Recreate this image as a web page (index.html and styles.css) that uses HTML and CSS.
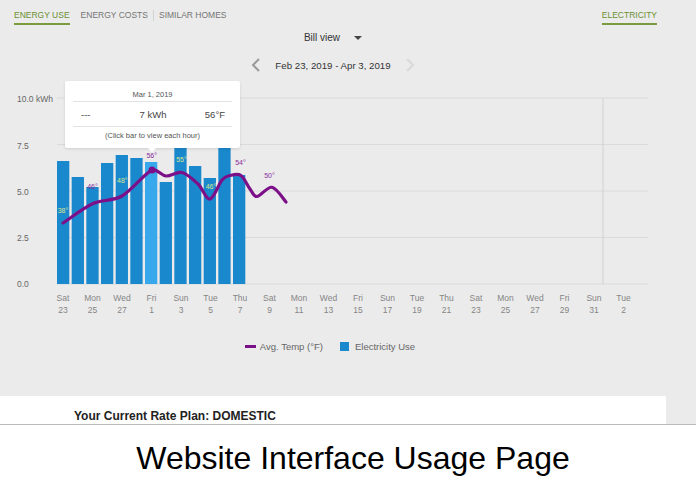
FILE: index.html
```html
<!DOCTYPE html>
<html>
<head>
<meta charset="utf-8">
<link rel="stylesheet" href="styles.css">
</head>
<body>
<div class="screen">
  <div class="panel">
    <div class="tabs">
      <div class="tab-group">
        <span class="tab active">Energy Use</span>
        <span class="tab">Energy Costs</span>
        <span class="sep"></span>
        <span class="tab">Similar Homes</span>
      </div>
      <span class="tab active">Electricity</span>
    </div>

    <div class="bill">Bill view <span class="caret"></span></div>

    <div class="daterange">
      <svg class="chev" width="10" height="14" viewBox="0 0 10 14"><polyline points="8,1 2,7 8,13" fill="none" stroke="#9a9a9a" stroke-width="2"/></svg>
      <span>Feb 23, 2019 - Apr 3, 2019</span>
      <svg class="chev" width="10" height="14" viewBox="0 0 10 14"><polyline points="2,1 8,7 2,13" fill="none" stroke="#d9d9d9" stroke-width="2"/></svg>
    </div>

    <div class="chart">
      <svg class="plot" width="666" height="240" viewBox="0 78 666 240">
        <g class="grid">
          <line x1="57" y1="98" x2="648" y2="98"/>
          <line x1="57" y1="144.5" x2="648" y2="144.5"/>
          <line x1="57" y1="191" x2="648" y2="191"/>
          <line x1="57" y1="237.5" x2="648" y2="237.5"/>
          <line x1="57" y1="284" x2="648" y2="284"/>
          <line class="vline" x1="603" y1="98" x2="603" y2="284"/>
        </g>
        <g class="ylab">
          <text x="17" y="102">10.0 kWh</text>
          <text x="17" y="149">7.5</text>
          <text x="17" y="195">5.0</text>
          <text x="17" y="241">2.5</text>
          <text x="17" y="287">0.0</text>
        </g>
        <g class="bars">
          <rect x="57" y="161" width="12.3" height="123"/>
          <rect x="71.67" y="177" width="12.3" height="107"/>
          <rect x="86.33" y="187" width="12.3" height="97"/>
          <rect x="101" y="163" width="12.3" height="121"/>
          <rect x="115.67" y="155" width="12.3" height="129"/>
          <rect x="130.33" y="158" width="12.3" height="126"/>
          <rect class="hl" x="145" y="162" width="12.3" height="122"/>
          <rect x="159.67" y="182" width="12.3" height="102"/>
          <rect x="174.33" y="146" width="12.3" height="138"/>
          <rect x="189" y="166" width="12.3" height="118"/>
          <rect x="203.67" y="178" width="12.3" height="106"/>
          <rect x="218.33" y="146" width="12.3" height="138"/>
          <rect x="233" y="175" width="12.3" height="109"/>
        </g>
        <path class="temp" d="M63,223 C68,219.8 83.2,208 93,203.5 C102.8,199 112.2,201.6 122,196 C131.8,190.4 144.7,173.3 152,170 C158,169 161,175.6 166,176 C171,176.4 176.7,171.2 182,172.5 C187.3,173.8 193.3,179.6 198,184 C202.7,188.4 206,199.7 210,199 C214,198.3 218.7,183.9 222,180 C225.3,176.1 226.8,176.3 230,175.5 C233.2,174.8 237.7,173.3 241,175.5 C244.3,177.8 247.3,185.5 250,189 C252.7,192.5 253.3,196.8 257,196.5 C260.7,196.2 267.2,186.4 272,187.3 C276.8,188.2 283.7,199.5 286,202"/>
        <circle class="dot" cx="152" cy="170" r="3.5"/>
        <g class="tlab">
          <text class="in" x="63" y="212.5">38°</text>
          <text class="out" x="92.5" y="188.5">46°</text>
          <text class="in" x="122.3" y="182.5">48°</text>
          <text class="out" x="151.7" y="157.5">56°</text>
          <text class="in" x="181.5" y="161.5">55°</text>
          <text class="in" x="211" y="189">46°</text>
          <text class="out" x="240.5" y="165">54°</text>
          <text class="out" x="269.5" y="177.5">50°</text>
        </g>
        <g class="xlab">
          <text x="63" y="301">Sat</text><text x="63" y="313">23</text>
          <text x="92.5" y="301">Mon</text><text x="92.5" y="313">25</text>
          <text x="122" y="301">Wed</text><text x="122" y="313">27</text>
          <text x="151.5" y="301">Fri</text><text x="151.5" y="313">1</text>
          <text x="181" y="301">Sun</text><text x="181" y="313">3</text>
          <text x="210.5" y="301">Tue</text><text x="210.5" y="313">5</text>
          <text x="240" y="301">Thu</text><text x="240" y="313">7</text>
          <text x="269.5" y="301">Sat</text><text x="269.5" y="313">9</text>
          <text x="299" y="301">Mon</text><text x="299" y="313">11</text>
          <text x="328.5" y="301">Wed</text><text x="328.5" y="313">13</text>
          <text x="358" y="301">Fri</text><text x="358" y="313">15</text>
          <text x="387.5" y="301">Sun</text><text x="387.5" y="313">17</text>
          <text x="417" y="301">Tue</text><text x="417" y="313">19</text>
          <text x="446.5" y="301">Thu</text><text x="446.5" y="313">21</text>
          <text x="476" y="301">Sat</text><text x="476" y="313">23</text>
          <text x="505.5" y="301">Mon</text><text x="505.5" y="313">25</text>
          <text x="535" y="301">Wed</text><text x="535" y="313">27</text>
          <text x="564.5" y="301">Fri</text><text x="564.5" y="313">29</text>
          <text x="594" y="301">Sun</text><text x="594" y="313">31</text>
          <text x="623.5" y="301">Tue</text><text x="623.5" y="313">2</text>
        </g>
      </svg>

      <div class="tooltip">
        <div class="tip-date">Mar 1, 2019</div>
        <div class="tip-row">
          <span class="tip-left">---</span>
          <span class="tip-mid">7 kWh</span>
          <span class="tip-right">56°F</span>
        </div>
        <div class="tip-hint">(Click bar to view each hour)</div>
      </div>
    </div>

    <div class="legend">
      <span class="leg-item"><span class="leg-line"></span>Avg. Temp (°F)</span>
      <span class="leg-item"><span class="leg-box"></span>Electricity Use</span>
    </div>

    <div class="card">Your Current Rate Plan: DOMESTIC</div>
  </div>
</div>
<div class="caption">Website Interface Usage Page</div>
</body>
</html>
```

FILE: styles.css
```css
* { box-sizing: border-box; }
html, body {
  margin: 0;
  padding: 0;
  background: #ffffff;
  font-family: "Liberation Sans", Arial, sans-serif;
}
body { width: 696px; height: 482px; overflow: hidden; }

.screen {
  height: 425px;
  background: #ebebeb;
  border-bottom: 1px solid #b9b9b9;
}
.panel {
  width: 666px;
  height: 100%;
  display: flex;
  flex-direction: column;
}

/* tabs */
.tabs {
  height: 30px;
  padding: 10px 9px 0 14px;
  display: flex;
  justify-content: space-between;
  align-items: flex-start;
}
.tab-group {
  display: flex;
  align-items: flex-start;
  gap: 11px;
}
.tab {
  font-size: 8.5px;
  line-height: 10px;
  text-transform: uppercase;
  color: #747474;
  padding-bottom: 3px;
  border-bottom: 2px solid transparent;
  white-space: nowrap;
}
.tab.active {
  color: #6a8f31;
  border-bottom-color: #7a9b3e;
}
.sep {
  width: 1px;
  height: 11px;
  background: #d2d2d2;
  margin: 0 -6px 0 -6px;
}

/* bill view */
.bill {
  height: 16px;
  line-height: 16px;
  font-size: 10px;
  color: #333;
  display: flex;
  justify-content: center;
  align-items: center;
  gap: 14px;
}
.caret {
  width: 0;
  height: 0;
  border-left: 4px solid transparent;
  border-right: 4px solid transparent;
  border-top: 4.5px solid #444;
}

/* date range */
.daterange {
  margin-top: 6px;
  height: 26px;
  display: flex;
  justify-content: center;
  align-items: center;
  gap: 14px;
  font-size: 9.7px;
  color: #333;
}
.chev { display: block; }

/* chart */
.chart {
  position: relative;
  height: 240px;
}
.plot { display: block; }
.grid line { stroke: #dadada; stroke-width: 1; }
.grid .vline { stroke: #d0d0d0; }
.ylab text {
  font-size: 8.5px;
  fill: #666;
  font-family: "Liberation Sans", Arial, sans-serif;
}
.bars rect { fill: #1a88cd; }
.bars rect.hl { fill: #38a8ec; }
.temp {
  fill: none;
  stroke: #7c1089;
  stroke-width: 3.2;
  stroke-linecap: round;
  stroke-linejoin: round;
}
.dot { fill: #7c1089; }
.tlab text {
  font-size: 7px;
  text-anchor: middle;
  font-family: "Liberation Sans", Arial, sans-serif;
}
.tlab .in { fill: #d9e68f; }
.tlab .out { fill: #8a2d9c; }
.xlab text {
  font-size: 8.5px;
  fill: #858585;
  text-anchor: middle;
  font-family: "Liberation Sans", Arial, sans-serif;
}

.tooltip {
  position: absolute;
  left: 65px;
  top: 3px;
  width: 175px;
  height: 67px;
  background: #fff;
  border-radius: 2px;
  box-shadow: 0 1px 3px rgba(0, 0, 0, 0.12);
  padding: 8px 8px 4px;
}
.tooltip::after {
  content: "";
  position: absolute;
  left: 83px;
  bottom: -4px;
  border-left: 4px solid transparent;
  border-right: 4px solid transparent;
  border-top: 4px solid #fff;
}
.tip-date {
  height: 13px;
  line-height: 12px;
  font-size: 7.5px;
  color: #555;
  text-align: center;
  border-bottom: 1px solid #e2e2e2;
}
.tip-row {
  height: 25px;
  display: grid;
  grid-template-columns: 1fr auto 1fr;
  align-items: center;
  font-size: 9.5px;
  color: #444;
  padding: 0 7px 0 8px;
  border-bottom: 1px solid #e2e2e2;
}
.tip-left { justify-self: start; }
.tip-right { justify-self: end; }
.tip-hint {
  height: 17px;
  line-height: 17px;
  font-size: 7.5px;
  color: #555;
  text-align: center;
}

/* legend */
.legend {
  margin-top: 20px;
  height: 16px;
  display: flex;
  justify-content: center;
  align-items: center;
  gap: 17px;
  font-size: 9.5px;
  color: #666;
  padding-right: 6px;
}
.leg-item {
  display: flex;
  align-items: center;
}
.leg-line {
  width: 11px;
  height: 3px;
  background: #7c1089;
  margin-right: 4px;
}
.leg-box {
  width: 9px;
  height: 9px;
  background: #1a88cd;
  margin-right: 6px;
}

/* card */
.card {
  margin-top: auto;
  height: 28px;
  background: #fff;
  padding: 13px 0 0 74px;
  font-size: 12px;
  line-height: 14px;
  font-weight: bold;
  color: #222;
}

.caption {
  padding: 15px 0 0 10px;
  text-align: center;
  font-size: 32px;
  line-height: 36px;
  color: #000;
}
```
